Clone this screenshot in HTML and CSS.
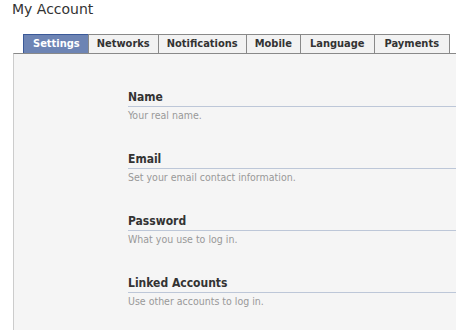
FILE: index.html
```html
<!DOCTYPE html>
<html>
<head>
<meta charset="utf-8">
<link rel="stylesheet" href="styles.css">
</head>
<body>
<h1 class="title">My Account</h1>
<div class="tabs">
  <a class="tab active">Settings</a>
  <a class="tab">Networks</a>
  <a class="tab">Notifications</a>
  <a class="tab">Mobile</a>
  <a class="tab wide">Language</a>
  <a class="tab wider">Payments</a>
</div>
<div class="panel">
  <div class="section">
    <h2 class="sec-title">Name</h2>
    <p class="sec-desc">Your real name.</p>
  </div>
  <div class="section">
    <h2 class="sec-title">Email</h2>
    <p class="sec-desc">Set your email contact information.</p>
  </div>
  <div class="section">
    <h2 class="sec-title">Password</h2>
    <p class="sec-desc">What you use to log in.</p>
  </div>
  <div class="section">
    <h2 class="sec-title">Linked Accounts</h2>
    <p class="sec-desc">Use other accounts to log in.</p>
  </div>
</div>
</body>
</html>
```
FILE: styles.css
```css
html, body {
  margin: 0;
  padding: 0;
  background: #fff;
  height: 100%;
  overflow: hidden;
}
body {
  font-family: "DejaVu Sans", Verdana, sans-serif;
  font-stretch: condensed;
  color: #333;
  display: flex;
  flex-direction: column;
}
.title {
  margin: 0;
  padding: 1px 0 0 12px;
  font-size: 14px;
  font-stretch: normal;
  font-weight: normal;
  line-height: 16px;
  color: #333;
}
.tabs {
  display: flex;
  margin: 17px 0 0 23px;
  position: relative;
  z-index: 1;
}
.tab {
  display: block;
  height: 18px;
  line-height: 18px;
  padding: 0 8px;
  font-size: 11px;
  font-weight: bold;
  color: #333;
  background: #f2f2f2;
  border: 1px solid #898989;
  border-bottom: none;
  margin-right: -1px;
}
.tab.active {
  background: #6d84b4;
  border-color: #3b5998;
  color: #fff;
  padding: 0 8px 0 9px;
}
.tab.wide {
  padding: 0 9px;
}
.tab.wider {
  padding: 0 10px;
}
.panel {
  flex: 1;
  margin-left: 13px;
  border-top: 1px solid #898989;
  border-left: 1px solid #cccccc;
  background: #f5f5f5;
  padding: 36px 0 0 114px;
}
.section {
  margin-bottom: 30px;
}
.sec-title {
  margin: 0;
  font-size: 12px;
  font-weight: bold;
  line-height: 15px;
  color: #333;
  padding-bottom: 1px;
  border-bottom: 1px solid #bdc7d8;
}
.sec-desc {
  margin: 2px 0 0;
  font-size: 10.5px;
  line-height: 13px;
  color: #999;
}
```
